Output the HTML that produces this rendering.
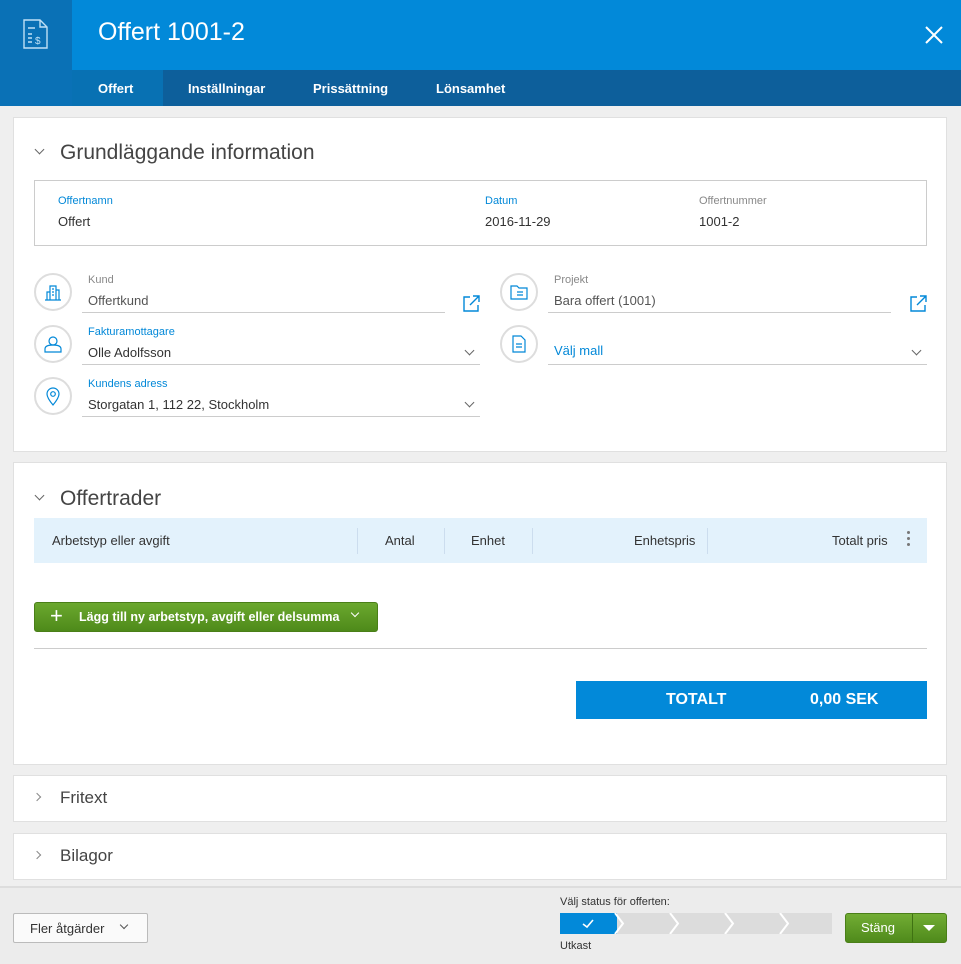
<!DOCTYPE html>
<html><head><meta charset="utf-8"><style>
*{box-sizing:border-box;margin:0;padding:0}
body{width:961px;height:964px;background:#efefef;font-family:"Liberation Sans",sans-serif;color:#333;position:relative;overflow:hidden;font-size:13px}
.abs{position:absolute}
.card{position:absolute;left:13px;width:934px;background:#fff;border:1px solid #e0e0e0}
.h2{position:absolute;font-size:21px;color:#444}
.lbl{font-size:11px;color:#0288d8}
.lblg{font-size:11px;color:#888}
.circ{position:absolute;width:38px;height:38px;border:2px solid #ddd;border-radius:50%;display:flex;align-items:center;justify-content:center}
.line{position:absolute;border-bottom:1px solid #ccc}
.chev{position:absolute;width:7px;height:7px;border-right:1.3px solid #666;border-bottom:1.3px solid #666;transform:rotate(45deg)}
</style></head><body>
<div class="abs" style="left:0;top:0;width:961px;height:70px;background:#0289d9"></div>
<div class="abs" style="left:0;top:0;width:72px;height:106px;background:#0a71b6"></div>
<svg class="abs" style="left:22px;top:18px" width="28" height="32" viewBox="0 0 28 32" fill="none" stroke="#bfe0f5" stroke-width="1.4"><path d="M2 2h16l7 7v21H2z"/><path d="M18 2v7h7M6 10h7M6 16h4M6 20h4M6 24h4"/><text x="13" y="26" font-size="10" fill="#bfe0f5" stroke="none" font-family="Liberation Sans">$</text></svg>
<div class="abs" style="left:98px;top:18px;font-size:25px;color:#fff">Offert 1001-2</div>
<svg class="abs" style="left:924px;top:25px" width="20" height="20" stroke="#fff" stroke-width="2"><path d="M2 2L18 18M18 2L2 18"/></svg>
<div class="abs" style="left:72px;top:70px;width:889px;height:36px;background:#0d5f9b"></div>
<div class="abs" style="left:72px;top:70px;width:91px;height:36px;background:#0871b3"></div>
<div class="abs" style="left:98px;top:81px;color:#fff;font-size:13px;font-weight:bold">Offert</div>
<div class="abs" style="left:188px;top:81px;color:#fff;font-size:13px;font-weight:bold">Inställningar</div>
<div class="abs" style="left:313px;top:81px;color:#fff;font-size:13px;font-weight:bold">Prissättning</div>
<div class="abs" style="left:436px;top:81px;color:#fff;font-size:13px;font-weight:bold">Lönsamhet</div>

<div class="card" style="top:117px;height:335px"></div>
<div class="chev" style="left:36px;top:146px"></div>
<div class="h2" style="left:60px;top:141px">Grundläggande information</div>
<div class="abs" style="left:34px;top:180px;width:893px;height:66px;border:1px solid #ccc"></div>
<div class="abs lbl" style="left:58px;top:195px">Offertnamn</div>
<div class="abs" style="left:58px;top:214px">Offert</div>
<div class="abs lbl" style="left:485px;top:195px">Datum</div>
<div class="abs" style="left:485px;top:214px">2016-11-29</div>
<div class="abs lblg" style="left:699px;top:195px">Offertnummer</div>
<div class="abs" style="left:699px;top:214px">1001-2</div>

<div class="circ" style="left:34px;top:273px"><svg width="18" height="18" fill="none" stroke="#0288d8" stroke-width="1.2"><path d="M1 17h16M3 17V9h3v8M6 17V3h6v14M12 17V7h3v10M8 6h2M8 9h2M8 12h2"/></svg></div>
<div class="abs lblg" style="left:88px;top:274px">Kund</div>
<div class="abs" style="left:88px;top:293px;color:#555">Offertkund</div>
<div class="line" style="left:82px;top:312px;width:363px"></div>
<svg class="abs" style="left:463px;top:295px" width="17" height="17" fill="none" stroke="#0288d8" stroke-width="1.4"><path d="M7 2H1v14h14v-6M10 1h6v6M16 1L7 10"/></svg>
<div class="circ" style="left:34px;top:325px"><svg width="18" height="18" fill="none" stroke="#0288d8" stroke-width="1.2"><circle cx="9" cy="6" r="4"/><path d="M1 17v-3c0-3 4-4 8-4s8 1 8 4v3z"/></svg></div>
<div class="abs lbl" style="left:88px;top:326px">Fakturamottagare</div>
<div class="abs" style="left:88px;top:345px">Olle Adolfsson</div>
<div class="line" style="left:82px;top:364px;width:398px"></div>
<div class="chev" style="left:466px;top:347px"></div>
<div class="circ" style="left:34px;top:377px"><svg width="18" height="20" fill="none" stroke="#0288d8" stroke-width="1.2"><path d="M9 19C4 13 3 10 3 8a6 6 0 0112 0c0 2-1 5-6 11z"/><circle cx="9" cy="8" r="2.3"/></svg></div>
<div class="abs lbl" style="left:88px;top:378px">Kundens adress</div>
<div class="abs" style="left:88px;top:397px">Storgatan 1, 112 22, Stockholm</div>
<div class="line" style="left:82px;top:416px;width:398px"></div>
<div class="chev" style="left:466px;top:399px"></div>

<div class="circ" style="left:500px;top:273px"><svg width="18" height="16" fill="none" stroke="#0288d8" stroke-width="1.2"><path d="M1 2h6l2 2h8v11H1zM7 8h6M7 11h6"/></svg></div>
<div class="abs lblg" style="left:554px;top:274px">Projekt</div>
<div class="abs" style="left:554px;top:293px;color:#555">Bara offert (1001)</div>
<div class="line" style="left:548px;top:312px;width:343px"></div>
<svg class="abs" style="left:910px;top:295px" width="17" height="17" fill="none" stroke="#0288d8" stroke-width="1.4"><path d="M7 2H1v14h14v-6M10 1h6v6M16 1L7 10"/></svg>
<div class="circ" style="left:500px;top:325px"><svg width="14" height="18" fill="none" stroke="#0288d8" stroke-width="1.2"><path d="M1 1h8l4 4v12H1zM4 9h6M4 12h6"/></svg></div>
<div class="abs" style="left:554px;top:343px;color:#0288d8">Välj mall</div>
<div class="line" style="left:548px;top:364px;width:379px"></div>
<div class="chev" style="left:913px;top:347px"></div>

<div class="card" style="top:462px;height:303px"></div>
<div class="chev" style="left:36px;top:492px"></div>
<div class="h2" style="left:60px;top:487px">Offertrader</div>
<div class="abs" style="left:34px;top:518px;width:893px;height:45px;background:#e3f2fc"></div>
<div class="abs" style="left:52px;top:533px">Arbetstyp eller avgift</div>
<div class="abs" style="left:357px;top:528px;height:26px;border-left:1px solid #cde"></div>
<div class="abs" style="left:385px;top:533px">Antal</div>
<div class="abs" style="left:444px;top:528px;height:26px;border-left:1px solid #cde"></div>
<div class="abs" style="left:471px;top:533px">Enhet</div>
<div class="abs" style="left:532px;top:528px;height:26px;border-left:1px solid #cde"></div>
<div class="abs" style="left:634px;top:533px">Enhetspris</div>
<div class="abs" style="left:707px;top:528px;height:26px;border-left:1px solid #cde"></div>
<div class="abs" style="left:832px;top:533px">Totalt pris</div>
<div class="abs" style="left:907px;top:531px;width:4px;font-size:0"><div style="width:3px;height:3px;background:#777;border-radius:50%;margin-bottom:3px"></div><div style="width:3px;height:3px;background:#777;border-radius:50%;margin-bottom:3px"></div><div style="width:3px;height:3px;background:#777;border-radius:50%"></div></div>
<div class="abs" style="left:34px;top:602px;width:344px;height:30px;border-radius:3px;background:linear-gradient(#6ba82e,#4e8a1a);border:1px solid #4a7f18"></div>
<div class="abs" style="left:50px;top:603px;color:#fff;font-size:22px">+</div>
<div class="abs" style="left:79px;top:610px;color:#fff;font-weight:bold;font-size:12.5px">Lägg till ny arbetstyp, avgift eller delsumma</div>
<div class="abs" style="left:352px;top:610px;width:6px;height:6px;border-right:1.3px solid #fff;border-bottom:1.3px solid #fff;transform:rotate(45deg)"></div>
<div class="abs" style="left:34px;top:648px;width:893px;border-top:1px solid #ccc"></div>
<div class="abs" style="left:576px;top:681px;width:351px;height:38px;background:#0289d9"></div>
<div class="abs" style="left:666px;top:691px;color:#fff;font-weight:bold;font-size:16px">TOTALT</div>
<div class="abs" style="left:810px;top:691px;color:#fff;font-weight:bold;font-size:16px">0,00 SEK</div>

<div class="card" style="top:775px;height:47px"></div>
<div class="abs" style="left:34px;top:794px;width:6px;height:6px;border-right:1.2px solid #888;border-bottom:1.2px solid #888;transform:rotate(-45deg)"></div>
<div class="h2" style="left:60px;top:788px;font-size:17px">Fritext</div>
<div class="card" style="top:833px;height:47px"></div>
<div class="abs" style="left:34px;top:852px;width:6px;height:6px;border-right:1.2px solid #888;border-bottom:1.2px solid #888;transform:rotate(-45deg)"></div>
<div class="h2" style="left:60px;top:846px;font-size:17px">Bilagor</div>

<div class="abs" style="left:0;top:886px;width:961px;height:78px;background:#ececec;border-top:2px solid #ddd"></div>
<div class="abs" style="left:13px;top:913px;width:135px;height:30px;background:#fafafa;border:1px solid #bbb;border-radius:2px"></div>
<div class="abs" style="left:30px;top:921px;font-size:13px">Fler åtgärder</div>
<div class="abs" style="left:121px;top:922px;width:6px;height:6px;border-right:1.2px solid #555;border-bottom:1.2px solid #555;transform:rotate(45deg)"></div>
<div class="abs" style="left:560px;top:896px;font-size:11px">Välj status för offerten:</div>
<div class="abs" style="left:560px;top:913px;width:272px;height:21px;background:#dcdcdc"></div>
<div class="abs" style="left:560px;top:913px;width:57px;height:21px;background:#0289d9"></div>
<svg class="abs" style="left:560px;top:913px" width="272" height="21" fill="none" stroke="#fff" stroke-width="2"><path d="M23 11l4 3 6-7" stroke-width="1.6"/><path d="M55 0l8 10.5L55 21M110 0l8 10.5L110 21M165 0l8 10.5L165 21M220 0l8 10.5L220 21"/></svg>
<div class="abs" style="left:560px;top:940px;font-size:11px">Utkast</div>
<div class="abs" style="left:845px;top:913px;width:102px;height:30px;border-radius:3px;background:linear-gradient(#72ad34,#4f8a1b);border:1px solid #4a7f18"></div>
<div class="abs" style="left:912px;top:914px;height:28px;border-left:1px solid #3f7212"></div>
<div class="abs" style="left:861px;top:920px;color:#fff;font-size:13px">Stäng</div>
<div class="abs" style="left:923px;top:925px;width:0;height:0;border-left:6px solid transparent;border-right:6px solid transparent;border-top:6px solid #fff"></div>
</body></html>
